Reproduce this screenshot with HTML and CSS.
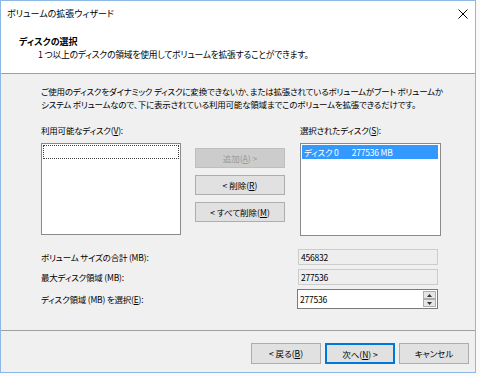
FILE: index.html
```html
<!DOCTYPE html>

<html lang="ja">
    <head>
        <meta charset="utf-8" />
        <title>ボリュームの拡張ウィザード</title>
        <link rel="stylesheet" href="styles.css">
    </head>
    <body>
        <div class="dialog">
            <!-- window caption -->
            <div class="titlebar">
                <span class="caption">ボリュームの拡張ウィザード</span>
                <svg class="close" width="10" height="10" viewBox="0 0 10 10">
                    <path d="M0.5 0.5 L9.5 9.5 M9.5 0.5 L0.5 9.5" stroke="#000" stroke-width="1" fill="none" />
                </svg>
            </div>

            <!-- wizard page header -->
            <div class="header">
                <div class="headTitle">ディスクの選択</div>
                <div class="headSub">1 つ以上のディスクの領域を使用してボリュームを拡張することができます。</div>
            </div>

            <div class="main">
                <p class="intro">ご使用のディスクをダイナミック ディスクに変換できないか、または拡張されているボリュームがブート ボリュームか<br>システム ボリュームなので、下に表示されている利用可能な領域までこのボリュームを拡張できるだけです。</p>

                <div class="picker">
                    <div class="listCol">
                        <label>利用可能なディスク(<u>V</u>):</label>
                        <div class="listbox">
                            <div class="item focused"></div>
                        </div>
                    </div>
                    <div class="moveBtns">
                        <a class="btn disabled">追加(<u>A</u>)&nbsp;&gt;</a>
                        <a class="btn">&lt;&nbsp;削除(<u>R</u>)</a>
                        <a class="btn">&lt;&nbsp;すべて削除(<u>M</u>)</a>
                    </div>
                    <div class="listCol">
                        <label>選択されたディスク(<u>S</u>):</label>
                        <div class="listbox">
                            <div class="item selected"><span>ディスク 0</span><span class="size">277536 MB</span></div>
                        </div>
                    </div>
                </div>

                <div class="fields">
                    <div class="fieldRow">
                        <span class="fieldLabel">ボリューム サイズの合計 (MB):</span>
                        <div class="readonly">456832</div>
                    </div>
                    <div class="fieldRow">
                        <span class="fieldLabel">最大ディスク領域 (MB):</span>
                        <div class="readonly">277536</div>
                    </div>
                    <div class="fieldRow">
                        <span class="fieldLabel">ディスク領域 (MB) を選択(<u>E</u>):</span>
                        <div class="spin">
                            <span class="spinValue">277536</span>
                            <div class="spinBtns">
                                <div class="spinBtn"><svg width="5" height="3" viewBox="0 0 5 3"><path d="M0 3 L2.5 0 L5 3 Z" fill="#333" /></svg></div>
                                <div class="spinBtn"><svg width="5" height="3" viewBox="0 0 5 3"><path d="M0 0 L5 0 L2.5 3 Z" fill="#333" /></svg></div>
                            </div>
                        </div>
                    </div>
                </div>
            </div>

            <!-- wizard navigation -->
            <div class="footer">
                <a class="btn nav">&lt;&nbsp;戻る(<u>B</u>)</a>
                <a class="btn nav default">次へ(<u>N</u>)&nbsp;&gt;</a>
                <a class="btn nav cancel">キャンセル</a>
            </div>
        </div>
    </body>
</html>
```

FILE: styles.css
```css
/* page */
body {
    margin:             0;
    background-color:   #FAFAFA;
    font-family:        "Noto Sans CJK JP", "Noto Sans", sans-serif;
    font-size:          9px;
    font-feature-settings: "palt";
    color:              #000000;
}
.dialog {
    width:              474px;
    height:             371px;
    border:             1px solid #8DB8E3;
    background-color:   #F0F0F0;
    display:            flex;
    flex-direction:     column;
}

/* caption */
.titlebar {
    height:             26px;
    line-height:        26px;
    background-color:   #FFFFFF;
    padding:            0 7px 0 6px;
    display:            flex;
    align-items:        center;
    justify-content:    space-between;
}
.titlebar .close {
    margin-top:         -1px;
}

/* page header */
.header {
    background-color:   #FFFFFF;
    height:             38px;
    padding-top:        8px;
    border-bottom:      1px solid #A0A0A0;
    line-height:        13px;
}
.headTitle {
    font-weight:        bold;
    padding-left:       18px;
}
.headSub {
    padding-left:       37px;
    font-size:          8.75px;
    letter-spacing:     -0.2px;
}

/* body */
.main, .footer {
    font-size:          8.5px;
    letter-spacing:     -0.2px;
}
.main {
    padding:            11px 0 0 40px;
    flex:               1;
}
.intro {
    margin:             0;
    line-height:        13px;
    white-space:        nowrap;
}
.picker {
    display:            flex;
    margin-top:         13px;
}
.listCol label {
    display:            block;
    line-height:        13px;
    margin-bottom:      6px;
}
.listbox {
    width:              137px;
    height:             89px;
    border:             1px solid #8A8A8A;
    background-color:   #FFFFFF;
    padding:            1px 0 0 1px;
    box-sizing:         content-box;
}
.listCol + .moveBtns {
    margin:             24px 15px 0 14px;
}
.moveBtns {
    display:            flex;
    flex-direction:     column;
    gap:                7px;
    width:              90px;
}
.moveBtns + .listCol .listbox {
    width:              138px;
    height:             90px;
}
.item {
    height:             14px;
    line-height:        14px;
    box-sizing:         border-box;
    width:              136px;
}
.item.focused {
    border:             1px dotted #404040;
}
.item.selected {
    background-color:   #3399FF;
    color:              #FFFFFF;
    padding-left:       2px;
}
.item .size {
    margin-left:        13px;
}

/* size fields */
.fields {
    margin-top:         13px;
    width:              397px;
}
.fieldRow {
    display:            flex;
    justify-content:    space-between;
    align-items:        center;
    margin-bottom:      4px;
}
.readonly {
    width:              136px;
    height:             14px;
    line-height:        14px;
    padding-left:       2px;
    border:             1px solid #CCCCCC;
    background-color:   #EEEEEE;
}
.spin {
    width:              137px;
    height:             18px;
    border:             1px solid #7A7A7A;
    background-color:   #FFFFFF;
    display:            flex;
    justify-content:    space-between;
    align-items:        center;
    padding-left:       2px;
}
.spinBtns {
    display:            flex;
    flex-direction:     column;
    height:             16px;
    margin-right:       1px;
}
.spinBtn {
    width:              13px;
    height:             8px;
    box-sizing:         border-box;
    border:             1px solid #ADADAD;
    background-color:   #E5E5E5;
    display:            flex;
    align-items:        center;
    justify-content:    center;
}

/* buttons */
a.btn {
    display:            block;
    height:             20px;
    line-height:        18px;
    box-sizing:         border-box;
    text-align:         center;
    border:             1px solid #ADADAD;
    background-color:   #E1E1E1;
    color:              #000000;
    text-decoration:    none;
    letter-spacing:     0;
}
a.btn.disabled {
    background-color:   #CCCCCC;
    border-color:       #BFBFBF;
    color:              #9A9A9A;
}
a.btn.default {
    border:             2px solid #0078D7;
    line-height:        16px;
}

/* navigation */
.footer {
    border-top:         1px solid #A0A0A0;
    height:             42px;
    display:            flex;
    align-items:        flex-start;
    padding:            12px 6px 0 0;
    justify-content:    flex-end;
    box-sizing:         border-box;
}
a.btn.nav {
    width:              70px;
    height:             21px;
    line-height:        19px;
}
a.btn.nav + a.btn.nav {
    margin-left:        4px;
}
a.btn.nav.cancel {
    margin-left:        12px;
}
```
